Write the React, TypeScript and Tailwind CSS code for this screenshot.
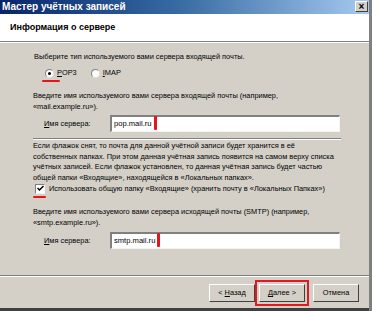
import React from 'react';

const font = { fontFamily: '"Liberation Sans", Arial, sans-serif' };

const RedMark = () => (
  <span className="inline-block w-[3px] h-[14px] bg-[#e8141c] ml-[2px] -mt-[2px] rounded-[1px]" />
);

const ServerInput = ({ value }: { value: string }) => (
  <div className="flex items-center">
    <span className="w-[77px] pl-[11px]">
      <span className="underline">И</span>мя сервера:
    </span>
    <div className="flex items-center w-[230px] h-[17px] bg-white border-t-2 border-l-2 border-t-[#808080] border-l-[#808080] border-b border-r border-b-[#f4f4f4] border-r-[#f4f4f4] pl-[2px] text-[7.6px]">
      {value}
      <RedMark />
    </div>
  </div>
);

const WinButton = ({ children, focused }: { children: React.ReactNode; focused?: boolean }) => (
  <div
    className={`flex items-center justify-center w-[46px] h-[18px] bg-[#d4d0c8] text-[7.4px] text-black border border-t-white border-l-white border-b-[#404040] border-r-[#404040] whitespace-pre ${
      focused ? 'outline-2 outline-[#e01a22] outline-offset-[2px]' : ''
    }`}
    style={focused ? { outlineStyle: 'solid' } : undefined}
  >
    <span>{children}</span>
  </div>
);

export default function App() {
  return (
    <div className="w-[372px] h-[311px] bg-[#d4d0c8] flex flex-col overflow-hidden border-r-[3px] border-r-[#808080]" style={font}>
      {/* title bar */}
      <div className="flex items-center justify-between h-[14px] pl-[2px] pr-[1px] bg-gradient-to-r from-[#0a246a] via-[#3a6ea5] to-[#a6caf0]">
        <span className="text-[10px] font-bold text-white leading-none">Мастер учётных записей</span>
        <div className="flex items-center justify-center w-[13px] h-[11px] bg-[#d4d0c8] border border-t-white border-l-white border-b-[#404040] border-r-[#404040] text-[10px] font-bold leading-none text-black">
          ×
        </div>
      </div>

      {/* header */}
      <div className="h-[28px] bg-white flex items-center pl-[10px] border-b border-b-[#808080]">
        <span className="text-[9px] font-bold text-black">Информация о сервере</span>
      </div>
      <div className="h-px bg-white" />

      {/* body */}
      <div className="h-[233px] flex flex-col pl-[33px] pt-[9px] text-[7.4px] leading-[10.5px] text-black whitespace-nowrap">
        <p className="pl-[1px]">Выберите тип используемого вами сервера входящей почты.</p>

        <div className="flex items-center gap-[14px] pl-[12px] mt-[5px] h-[12px]">
          <div className="relative flex items-center gap-[3px]">
            <span className="w-[9px] h-[9px] rounded-full bg-white border border-t-[#808080] border-l-[#808080] border-b-[#e0e0e0] border-r-[#e0e0e0] flex items-center justify-center">
              <span className="w-[3px] h-[3px] rounded-full bg-black" />
            </span>
            <span>
              <span className="underline">P</span>OP3
            </span>
            <span className="absolute left-[-3px] top-[12px] w-[18px] h-[2px] bg-[#e8141c] rounded" />
          </div>
          <div className="flex items-center gap-[3px]">
            <span className="w-[9px] h-[9px] rounded-full bg-white border border-t-[#808080] border-l-[#808080] border-b-[#e0e0e0] border-r-[#e0e0e0]" />
            <span>
              <span className="underline">I</span>MAP
            </span>
          </div>
        </div>

        <p className="mt-[12px]">
          Введите имя используемого вами сервера входящей почты (например,
          <br />
          «mail.example.ru»).
        </p>
        <div className="mt-[3px]">
          <ServerInput value="pop.mail.ru" />
        </div>

        <div className="mt-[6px] w-[308px] border-t border-t-[#808080] border-b border-b-white" />

        <p className="mt-[1px]">
          Если флажок снят, то почта для данной учётной записи будет хранится в её
          <br />
          собственных папках. При этом данная учётная запись появится на самом верху списка
          <br />
          учётных записей. Если флажок установлен, то данная учётная запись будет частью
          <br />
          общей папки «Входящие», находящейся в «Локальных папках».
        </p>

        <div className="relative flex items-center gap-[4px] h-[11px] pl-[2px]">
          <span className="w-[10px] h-[10px] bg-white border border-t-[#808080] border-l-[#808080] border-b-[#f4f4f4] border-r-[#f4f4f4] flex items-center justify-center">
            <svg width="7" height="7" viewBox="0 0 7 7">
              <path d="M0.5 3 L2.5 5 L6.5 1" stroke="#000" strokeWidth="1.5" fill="none" />
            </svg>
          </span>
          <span>Использовать общую папку «Входящие» (хранить почту в «Локальных Папках»)</span>
          <span className="absolute left-[0px] top-[13px] w-[13px] h-[2px] bg-[#e8141c] rounded" />
        </div>

        <p className="mt-[13px]">
          Введите имя используемого вами сервера исходящей почты (SMTP) (например,
          <br />
          «smtp.example.ru»).
        </p>
        <div className="mt-[4px]">
          <ServerInput value="smtp.mail.ru" />
        </div>
      </div>

      {/* footer */}
      <div className="border-t border-t-[#808080] border-b border-b-white" />
      <div className="h-[31px] flex items-center justify-end pr-[10px]">
        <WinButton>
          {'< '}
          <span className="underline">Н</span>азад
        </WinButton>
        <div className="ml-[4px] mr-[8px]">
          <WinButton focused>
            <span className="underline">Д</span>
            {'алее >'}
          </WinButton>
        </div>
        <WinButton>Отмена</WinButton>
      </div>
      <div className="h-[3px] bg-[#404040]" />
    </div>
  );
}
